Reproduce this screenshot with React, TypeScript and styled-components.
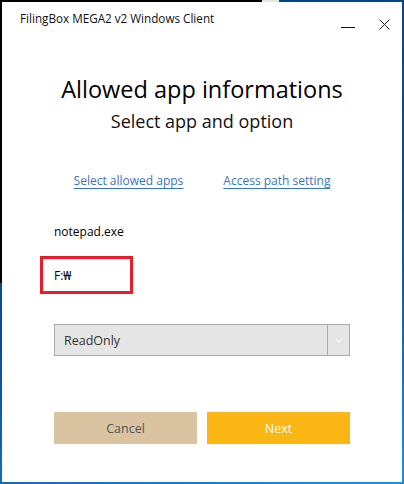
import styled, { createGlobalStyle } from "styled-components";

const GlobalStyle = createGlobalStyle`
  html, body {
    margin: 0;
    padding: 0;
  }
  body {
    font-family: "Open Sans", "Noto Sans", sans-serif;
    color: #000;
  }
`;

const Desktop = styled.div`
  width: 404px;
  height: 484px;
  box-sizing: border-box;
  padding: 2px;
  background:
    linear-gradient(#000, #000) 0 0 / 262px 283px no-repeat,
    linear-gradient(#e6e6e6, #e6e6e6) 262px 0 / 17px 2px no-repeat,
    linear-gradient(160deg, #083f7a 0%, #0b4f93 55%, #1a8ee8 100%);
`;

const Window = styled.div`
  width: 400px;
  height: 480px;
  background: #fff;
  display: flex;
  flex-direction: column;
`;

const TitleBar = styled.div`
  height: 36px;
  display: flex;
  align-items: flex-start;
  justify-content: space-between;
  padding: 0 0 0 18px;
`;

const Title = styled.div`
  font-size: 11.7px;
  line-height: 16px;
  padding-top: 8px;
  color: #111;
`;

const Controls = styled.div`
  display: flex;
  align-items: center;
  height: 44px;
`;

const ControlButton = styled.div`
  width: 36px;
  height: 44px;
  display: flex;
  align-items: center;
  justify-content: center;
`;

const Body = styled.div`
  display: flex;
  flex-direction: column;
  align-items: center;
  padding-top: 36px;
`;

const Heading = styled.h1`
  margin: 0;
  font-size: 23.5px;
  font-weight: 400;
  line-height: 30px;
`;

const Subheading = styled.h2`
  margin: 5px 0 0;
  font-size: 18px;
  font-weight: 400;
  line-height: 24px;
  color: #111;
`;

const LinkRow = styled.div`
  display: flex;
  gap: 40px;
  margin-top: 39px;
`;

const TabLink = styled.a`
  font-size: 12px;
  color: #3a78b5;
  text-decoration: underline;
  text-underline-offset: 3px;
  cursor: pointer;
`;

const Form = styled.div`
  width: 296px;
  display: flex;
  flex-direction: column;
  margin-top: 35px;
`;

const AppName = styled.div`
  font-size: 12px;
  line-height: 16px;
`;

const PathBox = styled.div`
  box-sizing: border-box;
  margin: 16px 0 0 -14px;
  width: 93px;
  height: 38px;
  border: 3px solid #e61e2b;
  display: flex;
  align-items: center;
  padding-left: 11px;
  font-size: 12px;
`;

const Select = styled.div`
  margin-top: 30px;
  height: 30px;
  border: 1px solid #acacac;
  background: #e5e5e5;
  display: flex;
`;

const SelectValue = styled.div`
  flex: 1;
  display: flex;
  align-items: center;
  padding-left: 9px;
  font-size: 12.5px;
  color: #333;
`;

const SelectArrow = styled.div`
  width: 21px;
  border-left: 1px solid #acacac;
  display: flex;
  align-items: center;
  justify-content: center;
`;

const ButtonRow = styled.div`
  display: flex;
  gap: 10px;
  margin-top: 56px;
`;

const Button = styled.button<{ $primary?: boolean }>`
  flex: 1;
  height: 32px;
  border: none;
  font-family: inherit;
  font-size: 12.5px;
  background: ${(p) => (p.$primary ? "#fbb615" : "#d9c3a1")};
  color: ${(p) => (p.$primary ? "#fff" : "#555")};
  cursor: pointer;
`;

export default function App() {
  return (
    <>
      <GlobalStyle />
      <Desktop>
        <Window>
          <TitleBar>
            <Title>FilingBox MEGA2 v2 Windows Client</Title>
            <Controls>
              <ControlButton>
                <svg width="14" height="10" viewBox="0 0 14 10">
                  <line x1="0" y1="8.5" x2="14" y2="8.5" stroke="#111" strokeWidth="1" />
                </svg>
              </ControlButton>
              <ControlButton>
                <svg width="11" height="11" viewBox="0 0 11 11">
                  <path d="M0.5 0.5 L10.5 10.5 M10.5 0.5 L0.5 10.5" stroke="#222" strokeWidth="1" />
                </svg>
              </ControlButton>
            </Controls>
          </TitleBar>
          <Body>
            <Heading>Allowed app informations</Heading>
            <Subheading>Select app and option</Subheading>
            <LinkRow>
              <TabLink>Select allowed apps</TabLink>
              <TabLink>Access path setting</TabLink>
            </LinkRow>
            <Form>
              <AppName>notepad.exe</AppName>
              <PathBox>F:₩</PathBox>
              <Select>
                <SelectValue>ReadOnly</SelectValue>
                <SelectArrow>
                  <svg width="8" height="5" viewBox="0 0 8 5">
                    <path d="M0.5 0.5 L4 4 L7.5 0.5" fill="none" stroke="#fafafa" strokeWidth="1" />
                  </svg>
                </SelectArrow>
              </Select>
              <ButtonRow>
                <Button>Cancel</Button>
                <Button $primary>Next</Button>
              </ButtonRow>
            </Form>
          </Body>
        </Window>
      </Desktop>
    </>
  );
}
